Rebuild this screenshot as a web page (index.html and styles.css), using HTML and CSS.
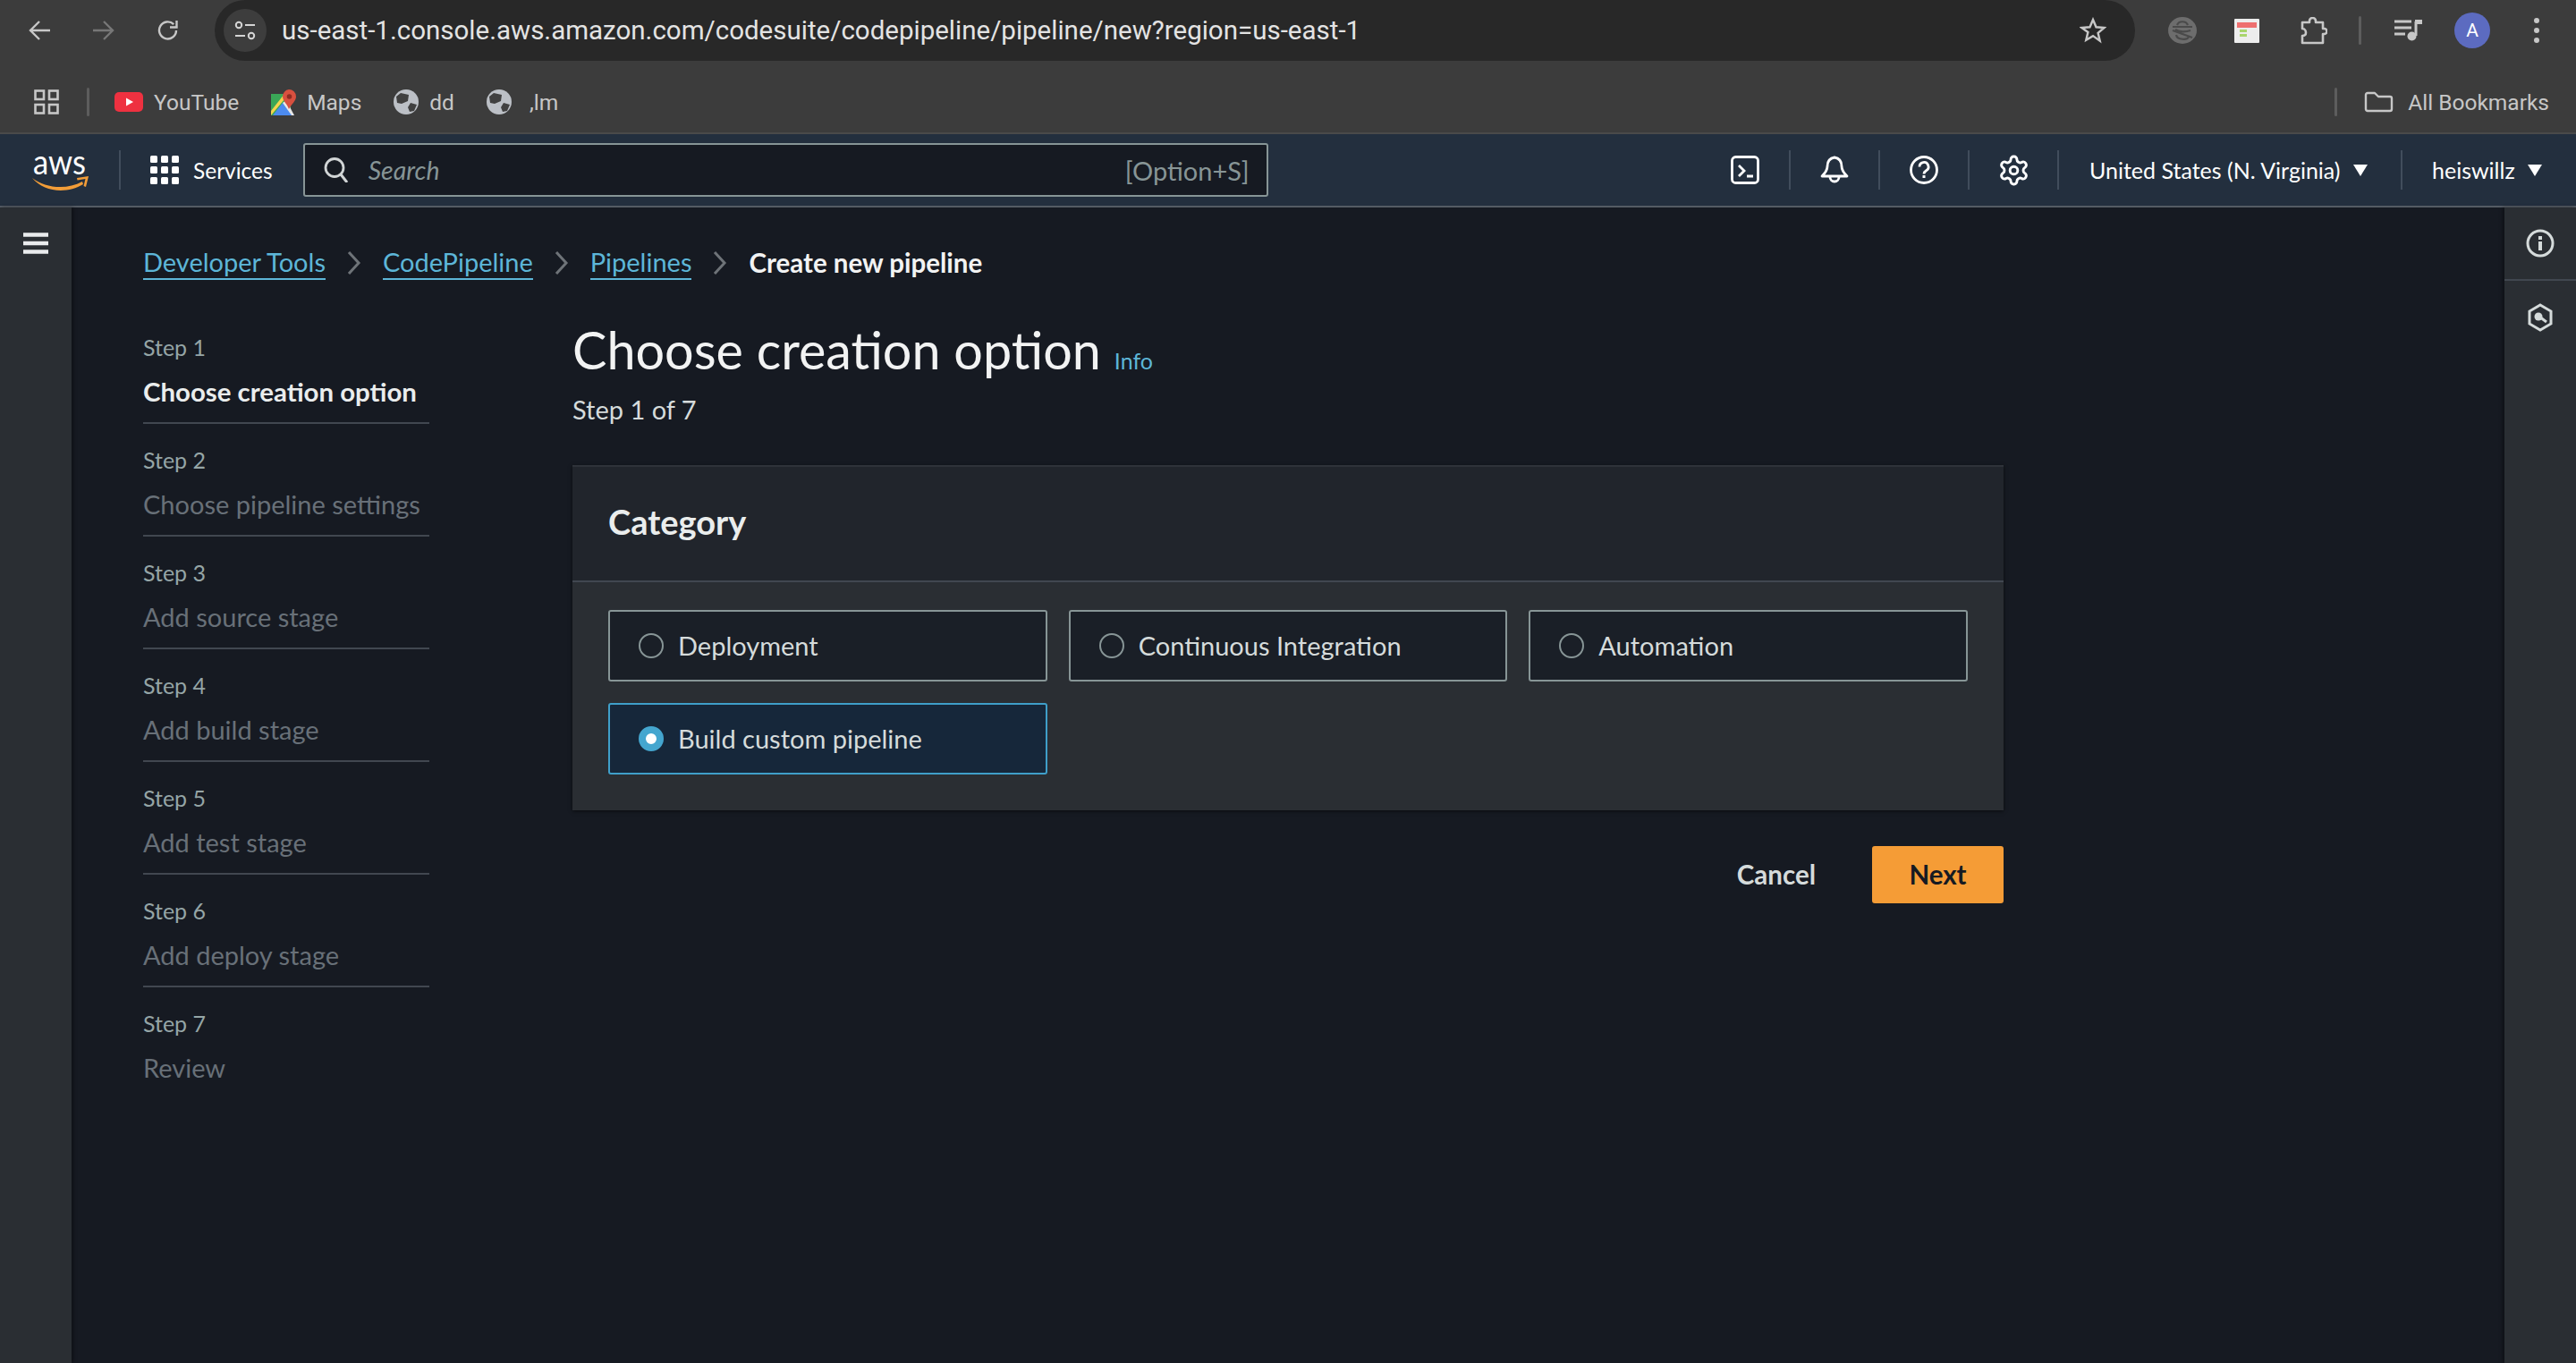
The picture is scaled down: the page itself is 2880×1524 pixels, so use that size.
FILE: index.html
```html
<!DOCTYPE html>
<html lang="en">
<head>
    <meta charset="UTF-8">
    <title>CodePipeline - Create new pipeline</title>
    <link rel="stylesheet" href="styles.css">
</head>
<body>
    <div class="chrome">
        <div class="tabbar">
            <div class="nav-icons">
                <svg width="24" height="24" viewBox="0 0 24 24"><path d="M24 12H3M12 2L2 12l10 10" fill="none" stroke="#c7c7c7" stroke-width="2.400"/></svg>
                <svg width="24" height="24" viewBox="0 0 24 24"><path d="M0 12h21M12 2l10 10-10 10" fill="none" stroke="#777" stroke-width="2.400"/></svg>
                <svg width="24" height="24" viewBox="0 0 24 24"><path d="M21 12a9.500 9.500 0 1 1-2.800-6.800M21.500 1v7.500H14" fill="none" stroke="#c7c7c7" stroke-width="2.400"/></svg>
            </div>
            <div class="omnibox">
                <span class="site-btn">
                    <svg width="24" height="22" viewBox="0 0 24 22"><circle cx="5" cy="5" r="3.200" fill="none" stroke="#d5d5d5" stroke-width="2"/><path d="M12 5h11M1 17h11" stroke="#d5d5d5" stroke-width="2"/><circle cx="19" cy="17" r="3.200" fill="none" stroke="#d5d5d5" stroke-width="2"/></svg>
                </span>
                <span class="url">us-east-1.console.aws.amazon.com/codesuite/codepipeline/pipeline/new?region=us-east-1</span>
                <svg class="star" width="30" height="30" viewBox="0 0 30 30"><path d="M15 3l3.500 8.300 9 .7-6.900 5.900 2.100 8.800L15 21.100l-7.700 4.600 2.100-8.800L2.500 12l9-.7z" fill="none" stroke="#c7c7c7" stroke-width="2.400"/></svg>
            </div>
            <div class="ext-icons">
                <svg width="32" height="30" viewBox="0 0 32 30"><ellipse cx="16" cy="15" rx="16" ry="15" fill="#6d6d6d"/><path d="M10 9c2-5 10-5 12 0M5 11h22M5 15l22 8M9 20c1 6 13 6 14 2M8 14c4 3 12 3 17 1" fill="none" stroke="#4a4a4a" stroke-width="2.200"/></svg>
                <svg width="28" height="27" viewBox="0 0 28 27"><rect width="28" height="27" rx="1" fill="#ededed"/><rect x="3" y="4" width="22" height="6" fill="#ee6f6f"/><rect x="6" y="12" width="8" height="3" fill="#a9d56d"/><rect x="6" y="17" width="8" height="3" fill="#a9d56d"/></svg>
                <svg width="32" height="31" viewBox="0 0 32 31"><path d="M4 6h8V4.500a3.500 3.500 0 0 1 7 0V6h8v7h1.500a3 3 0 0 1 0 6H27v10H4v-8c3 0 4-2 4-3.500S7 13 4 13z" fill="none" stroke="#c7c7c7" stroke-width="2.600" stroke-linejoin="round"/></svg>
                <span class="chrome-sep"></span>
                <svg width="31" height="24" viewBox="0 0 31 24"><path d="M0 2h19M0 9h19M0 16h12" stroke="#c7c7c7" stroke-width="2.800"/><path d="M24 2v16" stroke="#c7c7c7" stroke-width="3"/><path d="M23 0h8v5h-8z" fill="#c7c7c7"/><circle cx="19.500" cy="18.500" r="5" fill="#c7c7c7"/></svg>
                <span class="avatar">A</span>
                <svg width="10" height="30" viewBox="0 0 10 30"><circle cx="5" cy="4" r="3" fill="#c7c7c7"/><circle cx="5" cy="15" r="3" fill="#c7c7c7"/><circle cx="5" cy="26" r="3" fill="#c7c7c7"/></svg>
            </div>
        </div>
        <div class="bookmarks">
            <svg class="apps" width="28" height="28" viewBox="0 0 28 28"><g fill="none" stroke="#c7c7c7" stroke-width="2.600"><rect x="1.500" y="1.500" width="9.500" height="9.500"/><rect x="17" y="1.500" width="9.500" height="9.500"/><rect x="1.500" y="17" width="9.500" height="9.500"/><rect x="17" y="17" width="9.500" height="9.500"/></g></svg>
            <span class="chrome-sep"></span>
            <span class="bm">
                <svg width="32" height="22" viewBox="0 0 32 22"><rect width="32" height="22" rx="5" fill="#ee3140"/><path d="M13 6.500l8 4.500-8 4.500z" fill="#fff"/></svg>YouTube
            </span>
            <span class="bm">
                <svg width="28" height="29" viewBox="0 0 28 29"><path d="M0 5h22v24H0z" fill="#3aa757"/><path d="M2 29l11-14 11 14z" fill="#4c8bf0"/><path d="M0 24L15 5h5L0 29z" fill="#f4d44d"/><path d="M17 12l9 17h-3L13 15z" fill="#e8e8e8"/><path d="M20 0a8 8 0 0 1 8 8c0 5-5 8-8 14-2-6-7-9-7-14a8 8 0 0 1 7-8z" fill="#d8503f"/><circle cx="20.500" cy="8" r="2.800" fill="#8e2c21"/></svg>Maps
            </span>
            <span class="bm">
                <svg width="28" height="28" viewBox="0 0 28 28"><circle cx="14" cy="14" r="14" fill="#bcc0c6"/><path d="M8 4l9 2-1 7-7 3-5-1-1-7zM19 15l7 2-3 7-5 1-2-5z" fill="#404040"/></svg>dd
            </span>
            <span class="bm bm-last">
                <svg width="28" height="28" viewBox="0 0 28 28"><circle cx="14" cy="14" r="14" fill="#bcc0c6"/><path d="M8 4l9 2-1 7-7 3-5-1-1-7zM19 15l7 2-3 7-5 1-2-5z" fill="#404040"/></svg>,lm
            </span>
            <span class="spacer"></span>
            <span class="chrome-sep"></span>
            <span class="bm all-bm">
                <svg width="33" height="24" viewBox="0 0 33 24"><path d="M2 4a2 2 0 0 1 2-2h8l4 4h13a2 2 0 0 1 2 2v12a2 2 0 0 1-2 2H4a2 2 0 0 1-2-2z" fill="none" stroke="#c7c7c7" stroke-width="2.400" stroke-linejoin="round"/></svg>All Bookmarks
            </span>
        </div>
    </div>

    <header class="topnav">
        <svg class="aws-logo" width="64" height="70" viewBox="0 0 64 70">
            <text x="1" y="39" class="aws-word" textLength="59" lengthAdjust="spacingAndGlyphs">aws</text>
            <path d="M0 43c14 11 38 14 56 4l1 3c-18 11-44 9-57-7z" fill="#f29d38"/>
            <path d="M50 43l13-2-3 12-2.500-1 2-8-9 1.500z" fill="#f29d38"/>
        </svg>
        <span class="nav-sep"></span>
        <svg class="grid-icon" width="32" height="32" viewBox="0 0 32 32"><g fill="#fff"><rect y="0" width="8" height="8" rx="1.500"/><rect x="12" width="8" height="8" rx="1.500"/><rect x="24" width="8" height="8" rx="1.500"/><rect y="12" width="8" height="8" rx="1.500"/><rect x="12" y="12" width="8" height="8" rx="1.500"/><rect x="24" y="12" width="8" height="8" rx="1.500"/><rect y="24" width="8" height="8" rx="1.500"/><rect x="12" y="24" width="8" height="8" rx="1.500"/><rect x="24" y="24" width="8" height="8" rx="1.500"/></g></svg>
        <span class="services">Services</span>
        <div class="search">
            <svg width="28" height="28" viewBox="0 0 28 28"><circle cx="12" cy="11.500" r="10" fill="none" stroke="#d1d5d6" stroke-width="2.800"/><path d="M19 19l7 9" stroke="#d1d5d6" stroke-width="3"/></svg>
            <span class="search-text">Search</span>
            <span class="shortcut">[Option+S]</span>
        </div>
        <span class="spacer"></span>
        <div class="nav-btn">
            <svg width="32" height="32" viewBox="0 0 32 32"><rect x="1.500" y="1.500" width="29" height="29" rx="4" fill="none" stroke="#fff" stroke-width="2.800"/><path d="M9 11l6 6-6 6M18 23h7" fill="none" stroke="#fff" stroke-width="2.800"/></svg>
        </div>
        <div class="nav-btn">
            <svg width="32" height="32" viewBox="0 0 32 32"><path d="M16 2c-6 1-8 5-8 10 0 5-3 8-6 11h28c-3-3-6-6-6-11 0-5-2-9-8-10z" fill="none" stroke="#fff" stroke-width="2.800" stroke-linejoin="round"/><path d="M11 24a5 5 0 0 0 10 0" fill="none" stroke="#fff" stroke-width="2.800"/></svg>
        </div>
        <div class="nav-btn">
            <svg width="32" height="32" viewBox="0 0 32 32"><circle cx="16" cy="16" r="14.500" fill="none" stroke="#fff" stroke-width="2.800"/><path d="M11 12.500a5 5 0 1 1 7.500 4.300c-1.600 1-2.500 1.700-2.500 3.700" fill="none" stroke="#fff" stroke-width="2.800"/><rect x="14.500" y="22" width="3" height="3" fill="#fff"/></svg>
        </div>
        <div class="nav-btn">
            <svg width="37" height="37" viewBox="0 0 24 24" fill="none" stroke="#fff" stroke-width="1.900"><path d="M12.220 2h-.44a2 2 0 0 0-2 2v.18a2 2 0 0 1-1 1.730l-.43.25a2 2 0 0 1-2 0l-.15-.08a2 2 0 0 0-2.730.73l-.22.38a2 2 0 0 0 .73 2.730l.15.1a2 2 0 0 1 1 1.720v.51a2 2 0 0 1-1 1.740l-.15.09a2 2 0 0 0-.73 2.730l.22.38a2 2 0 0 0 2.730.73l.15-.08a2 2 0 0 1 2 0l.43.25a2 2 0 0 1 1 1.730V20a2 2 0 0 0 2 2h.44a2 2 0 0 0 2-2v-.18a2 2 0 0 1 1-1.730l.43-.25a2 2 0 0 1 2 0l.15.08a2 2 0 0 0 2.730-.73l.22-.39a2 2 0 0 0-.73-2.730l-.15-.08a2 2 0 0 1-1-1.740v-.5a2 2 0 0 1 1-1.740l.15-.09a2 2 0 0 0 .73-2.730l-.22-.38a2 2 0 0 0-2.730-.73l-.15.08a2 2 0 0 1-2 0l-.43-.25a2 2 0 0 1-1-1.730V4a2 2 0 0 0-2-2z"/><circle cx="12" cy="12" r="2.800"/></svg>
        </div>
        <div class="nav-menu region"><span>United States (N. Virginia)</span><i class="caret"></i></div>
        <div class="nav-menu user"><span>heiswillz</span><i class="caret"></i></div>
    </header>

    <div class="console">
        <aside class="rail rail-left">
            <svg width="28" height="24" viewBox="0 0 28 24"><path d="M0 2.500h28M0 12h28M0 21.500h28" stroke="#e9ebed" stroke-width="4.500"/></svg>
        </aside>

        <main class="content">
            <nav class="crumbs">
                <a>Developer Tools</a>
                <svg width="16" height="28" viewBox="0 0 16 28"><path d="M2 2l11 12L2 26" fill="none" stroke="#6e7378" stroke-width="3"/></svg>
                <a>CodePipeline</a>
                <svg width="16" height="28" viewBox="0 0 16 28"><path d="M2 2l11 12L2 26" fill="none" stroke="#6e7378" stroke-width="3"/></svg>
                <a>Pipelines</a>
                <svg width="16" height="28" viewBox="0 0 16 28"><path d="M2 2l11 12L2 26" fill="none" stroke="#6e7378" stroke-width="3"/></svg>
                <b>Create new pipeline</b>
            </nav>

            <div class="wizard">
                <ol class="steps">
                    <li class="step active"><small>Step 1</small><span>Choose creation option</span></li>
                    <li class="step"><small>Step 2</small><span>Choose pipeline settings</span></li>
                    <li class="step"><small>Step 3</small><span>Add source stage</span></li>
                    <li class="step"><small>Step 4</small><span>Add build stage</span></li>
                    <li class="step"><small>Step 5</small><span>Add test stage</span></li>
                    <li class="step"><small>Step 6</small><span>Add deploy stage</span></li>
                    <li class="step last"><small>Step 7</small><span>Review</span></li>
                </ol>

                <section class="form">
                    <div class="title-row">
                        <h1>Choose creation option</h1>
                        <a class="info">Info</a>
                    </div>
                    <p class="subtitle">Step 1 of 7</p>

                    <div class="card">
                        <div class="card-head"><h2>Category</h2></div>
                        <div class="card-body">
                            <div class="tile"><i class="radio"></i>Deployment</div>
                            <div class="tile"><i class="radio"></i>Continuous Integration</div>
                            <div class="tile"><i class="radio"></i>Automation</div>
                            <div class="tile selected"><i class="radio"></i>Build custom pipeline</div>
                        </div>
                    </div>

                    <div class="actions">
                        <button class="btn-link">Cancel</button>
                        <button class="btn-primary">Next</button>
                    </div>
                </section>
            </div>
        </main>

        <aside class="rail rail-right">
            <div class="rail-btn">
                <svg width="32" height="32" viewBox="0 0 32 32"><circle cx="16" cy="16" r="14" fill="none" stroke="#d5dbdb" stroke-width="3"/><rect x="14" y="14" width="4" height="10" fill="#d5dbdb"/><rect x="14" y="8" width="4" height="4" fill="#d5dbdb"/></svg>
            </div>
            <div class="rail-btn">
                <svg width="30" height="32" viewBox="0 0 30 32"><path d="M15 2l12 7v14l-12 7-12-7V9z" fill="none" stroke="#d5dbdb" stroke-width="3"/><circle cx="13" cy="15" r="4.500" fill="#d5dbdb"/><path d="M14 15l8 6" stroke="#d5dbdb" stroke-width="3"/></svg>
            </div>
        </aside>
    </div>
</body>
</html>
```

FILE: styles.css
```css
* {
    box-sizing: border-box;
}
body {
    margin: 0;
    display: flex;
    flex-direction: column;
    height: 1524px;
    overflow: hidden;
    background-color: #161a22;
    font-family: Lato, "Open Sans", sans-serif;
    color: #e9ebed;
}
.spacer {
    flex: 1;
}

/* browser chrome */
.chrome {
    height: 150px;
    flex-shrink: 0;
    background-color: #3c3c3c;
    border-bottom: 2px solid #4a4a4a;
    font-family: Roboto, sans-serif;
}
.tabbar {
    height: 68px;
    display: flex;
    align-items: center;
}
.nav-icons {
    display: flex;
    gap: 48px;
    padding-left: 32px;
    width: 240px;
}
.omnibox {
    width: 2147px;
    height: 68px;
    background-color: #282828;
    border-radius: 34px;
    display: flex;
    align-items: center;
    padding-left: 10px;
}
.site-btn {
    width: 48px;
    height: 48px;
    border-radius: 50%;
    background-color: #3d3d3d;
    display: flex;
    align-items: center;
    justify-content: center;
}
.url {
    margin-left: 17px;
    font-size: 29.500px;
    color: #e3e3e3;
    flex: 1;
    white-space: nowrap;
}
.star {
    margin-right: 32px;
}
.ext-icons {
    display: flex;
    align-items: center;
    padding-left: 37px;
}
.ext-icons svg:nth-child(2) {
    margin-left: 42px;
}
.ext-icons svg:nth-child(3) {
    margin-left: 44px;
}
.ext-icons .chrome-sep {
    margin-left: 35px;
}
.ext-icons svg:nth-child(5) {
    margin-left: 37px;
}
.avatar {
    width: 40px;
    height: 40px;
    margin-left: 36px;
    border-radius: 50%;
    background-color: #5c6bc0;
    color: #fff;
    font-size: 21px;
    display: flex;
    align-items: center;
    justify-content: center;
}
.ext-icons svg:last-child {
    margin-left: 47px;
}
.chrome-sep {
    width: 3px;
    height: 32px;
    border-radius: 2px;
    background-color: #5d5d5d;
}
.bookmarks {
    height: 80px;
    padding: 12px 30px 0 38px;
    display: flex;
    align-items: center;
}
.bookmarks > .chrome-sep:nth-child(2) {
    margin: 0 28px 0 31px;
}
.bm {
    display: flex;
    align-items: center;
    gap: 12px;
    font-size: 24.500px;
    color: #c7c7c7;
    margin-right: 36px;
}
.bm-last {
    gap: 20px;
}
.all-bm {
    margin: 0 0 0 30px;
    gap: 16px;
}

/* aws top nav */
.topnav {
    height: 82px;
    flex-shrink: 0;
    background-color: #232f3e;
    border-bottom: 2px solid #545b64;
    display: flex;
    align-items: center;
    padding-left: 36px;
    color: #fff;
}
.aws-logo {
    margin-top: 2px;
}
.aws-word {
    font-family: Lato, sans-serif;
    font-size: 38px;
    fill: #fff;
}
.nav-sep {
    width: 2px;
    height: 44px;
    margin-left: 33px;
    background-color: #414d5c;
}
.grid-icon {
    margin-left: 33px;
}
.services {
    margin-left: 16px;
    font-size: 24.500px;
}
.search {
    width: 1079px;
    height: 60px;
    margin-left: 34px;
    background-color: #161a22;
    border: 2px solid #879596;
    border-radius: 3px;
    display: flex;
    align-items: center;
    padding: 0 19px 0 21px;
}
.search-text {
    margin-left: 22px;
    font-size: 28.500px;
    font-style: italic;
    color: #879596;
    flex: 1;
}
.shortcut {
    font-size: 29px;
    color: #879596;
}
.nav-btn {
    width: 100px;
    height: 44px;
    display: flex;
    align-items: center;
    justify-content: center;
    border-right: 2px solid #414d5c;
}
.nav-menu {
    display: flex;
    align-items: center;
    height: 44px;
    font-size: 25px;
}
.region {
    width: 384px;
    padding-left: 34px;
    border-right: 2px solid #414d5c;
}
.user {
    width: 194px;
    padding-left: 33px;
}
.caret {
    width: 0;
    height: 0;
    margin-left: 14px;
    border-left: 8px solid transparent;
    border-right: 8px solid transparent;
    border-top: 13px solid #fff;
}

/* console body */
.console {
    flex: 1;
    display: flex;
    min-height: 0;
}
.rail {
    flex-shrink: 0;
    width: 80px;
    background-color: #2a2e33;
}
.rail-left {
    padding: 28px 0 0 26px;
    box-shadow: 2px 0 4px rgba(0, 0, 0, 0.4);
}
.rail-right {
    box-shadow: -2px 0 4px rgba(0, 0, 0, 0.4);
}
.rail-btn {
    height: 82px;
    display: flex;
    align-items: center;
    justify-content: center;
    border-bottom: 2px solid #414750;
}
.rail-btn:last-child {
    border-bottom: none;
}
.content {
    flex: 1;
    padding: 42px 0 0 80px;
}

.crumbs {
    display: flex;
    align-items: center;
    gap: 24px;
    height: 40px;
    font-size: 29px;
}
.crumbs a {
    color: #5db6d8;
    border-bottom: 2px solid #5db6d8;
    line-height: 36px;
}
.crumbs b {
    margin-bottom: 2px;
    color: #f2f3f3;
    font-size: 29.500px;
    font-weight: 700;
}

.wizard {
    display: flex;
    margin-top: 34px;
}
.steps {
    list-style: none;
    margin: 0;
    padding: 0;
    width: 320px;
    flex-shrink: 0;
}
.step {
    height: 126px;
    padding-top: 24px;
    border-bottom: 2px solid #414750;
}
.step.last {
    border-bottom: none;
}
.step small {
    display: block;
    font-size: 25px;
    line-height: 32px;
    color: #95a5a6;
}
.step span {
    display: block;
    margin-top: 17px;
    font-size: 29px;
    line-height: 34px;
    color: #687078;
    white-space: nowrap;
}
.step.active span {
    color: #eaeded;
    font-size: 29.400px;
    font-weight: 700;
}

.form {
    width: 1600px;
    margin-left: 160px;
}
.title-row {
    display: flex;
    align-items: baseline;
    gap: 15px;
    margin-top: 9px;
}
h1 {
    margin: 0;
    font-size: 57.500px;
    font-weight: 400;
    line-height: 68px;
    color: #f2f3f3;
}
.info {
    font-size: 25px;
    color: #5db6d8;
}
.subtitle {
    margin: 15px 0 0;
    font-size: 29px;
    line-height: 36px;
    color: #d5dbdb;
}
.card {
    margin-top: 44px;
    background-color: #2a2e33;
    border-top: 2px solid #2f333a;
    box-shadow: 0 1px 4px rgba(0, 0, 0, 0.6);
}
.card-head {
    height: 129px;
    background-color: #21252c;
    border-bottom: 2px solid #414750;
    display: flex;
    align-items: center;
    padding: 0 0 5px 40px;
}
h2 {
    margin: 0;
    font-size: 38px;
    font-weight: 700;
    color: #eaeded;
}
.card-body {
    display: grid;
    grid-template-columns: repeat(3, 1fr);
    gap: 24px;
    padding: 31px 40px 40px;
}
.tile {
    height: 80px;
    padding-left: 32px;
    display: flex;
    align-items: center;
    gap: 16px;
    font-size: 29px;
    line-height: 36px;
    color: #d5dbdb;
    background-color: #1a1f27;
    border: 2px solid #879596;
    border-radius: 3px;
}
.tile {
    padding-bottom: 1px;
}
.tile.selected {
    background-color: #16273a;
    border-color: #3f9fc9;
}
.radio {
    width: 28px;
    height: 28px;
    border-radius: 50%;
    border: 2px solid #879596;
}
.tile.selected .radio {
    border: 8px solid #44a6cf;
    background-color: #fff;
}
.actions {
    display: flex;
    justify-content: flex-end;
    align-items: center;
    margin-top: 40px;
}
.actions button {
    font-family: inherit;
    font-weight: 700;
    font-size: 29.500px;
    border: none;
}
.btn-link {
    background: none;
    color: #d5dbdb;
    margin: 0 63px 2px 0;
    padding: 0;
}
.btn-primary {
    width: 147px;
    height: 64px;
    padding: 0 0 2px;
    background-color: #f59c36;
    color: #161a22;
    border-radius: 3px;
}
```
